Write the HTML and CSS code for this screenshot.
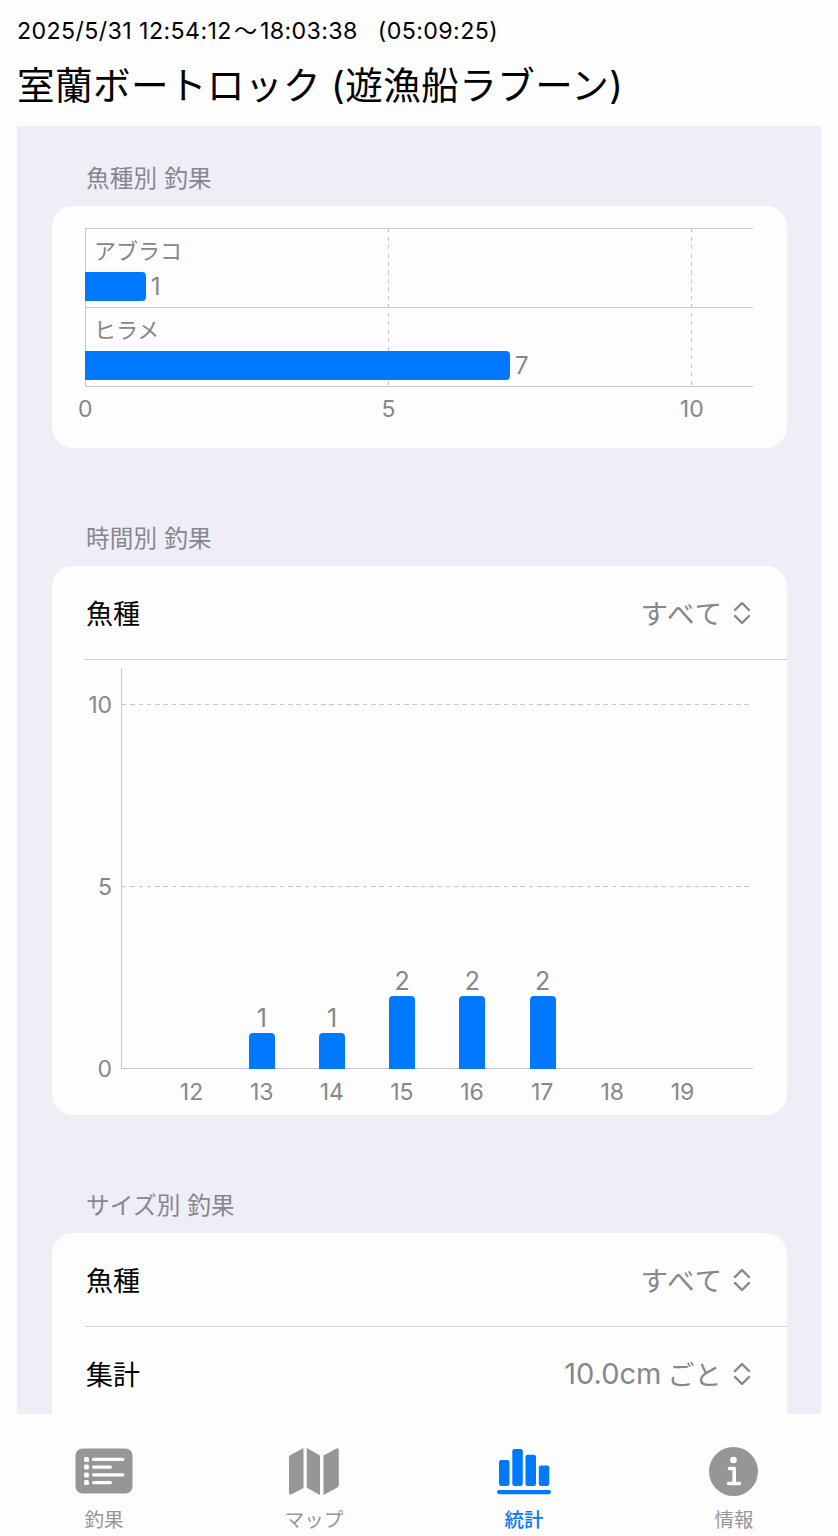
FILE: index.html
```html
<!DOCTYPE html>
<html lang="ja">
<head>
    <meta charset="UTF-8">
    <meta name="viewport" content="width=device-width, initial-scale=1.0">
    <title>室蘭ボートロック</title>
    <link rel="stylesheet" href="styles.css">
</head>
<body>

    <header class="header">
        <p class="date"><span>2025/5/31 12:54:12</span><span class="wave">〜</span><span>18:03:38</span><span class="duration">(05:09:25)</span></p>
        <h1>室蘭ボートロック (遊漁船ラブーン)</h1>
    </header>

    <main class="content">
        <!-- Catch by species -->
        <h2>魚種別 釣果</h2>
        <section class="card species-card">
            <div class="h-plot">
                <div class="h-row">
                    <span class="h-name">アブラコ</span>
                    <div class="h-line"><div class="h-bar" style="width: 9.09%"></div><span>1</span></div>
                </div>
                <div class="h-row">
                    <span class="h-name">ヒラメ</span>
                    <div class="h-line"><div class="h-bar" style="width: 63.64%"></div><span>7</span></div>
                </div>
            </div>
            <div class="h-axis"><span>0</span><span>5</span><span>10</span></div>
        </section>

        <!-- Catch by hour -->
        <h2>時間別 釣果</h2>
        <section class="card time-card">
            <div class="row">
                <span>魚種</span>
                <span class="picker"><span class="all">すべて</span>
                    <svg class="chevrons" viewBox="0 0 18 24"><path d="M2 9 9 2l7 7M2 15l7 7 7-7"/></svg>
                </span>
            </div>
            <div class="v-chart">
                <div class="v-axis"><span>10</span><span>5</span><span>0</span></div>
                <div class="v-plot">
                    <div class="v-col"></div>
                    <div class="v-col"><span>1</span><div class="v-bar" style="height: 9.09%"></div></div>
                    <div class="v-col"><span>1</span><div class="v-bar" style="height: 9.09%"></div></div>
                    <div class="v-col"><span>2</span><div class="v-bar" style="height: 18.18%"></div></div>
                    <div class="v-col"><span>2</span><div class="v-bar" style="height: 18.18%"></div></div>
                    <div class="v-col"><span>2</span><div class="v-bar" style="height: 18.18%"></div></div>
                    <div class="v-col"></div>
                    <div class="v-col"></div>
                </div>
                <div class="v-hours">
                    <span>12</span><span>13</span><span>14</span><span>15</span><span>16</span><span>17</span><span>18</span><span>19</span>
                </div>
            </div>
        </section>

        <!-- Catch by size -->
        <h2>サイズ別 釣果</h2>
        <section class="card size-card">
            <div class="row">
                <span>魚種</span>
                <span class="picker"><span class="all">すべて</span>
                    <svg class="chevrons" viewBox="0 0 18 24"><path d="M2 9 9 2l7 7M2 15l7 7 7-7"/></svg>
                </span>
            </div>
            <div class="row last">
                <span>集計</span>
                <span class="picker"><span class="size">10.0cm</span>ごと
                    <svg class="chevrons" viewBox="0 0 18 24"><path d="M2 9 9 2l7 7M2 15l7 7 7-7"/></svg>
                </span>
            </div>
        </section>
    </main>

    <nav class="tabs">
        <a class="tab">
            <svg width="58" height="52" viewBox="0 0 58 52">
                <rect x="0.5" y="3.5" width="57" height="45" rx="7" fill="currentColor"/>
                <g fill="#fdfdfd">
                    <rect x="9" y="12" width="5" height="5" rx="1.5"/>
                    <rect x="9" y="19.5" width="5" height="5" rx="1.5"/>
                    <rect x="9" y="27.5" width="5" height="5" rx="1.5"/>
                    <rect x="9" y="35" width="5" height="5" rx="1.5"/>
                    <rect x="17" y="12.8" width="32.5" height="3.2" rx="1.6"/>
                    <rect x="17" y="20.5" width="20" height="3.2" rx="1.6"/>
                    <rect x="17" y="28.2" width="32.5" height="3.2" rx="1.6"/>
                    <rect x="17" y="36" width="20" height="3.2" rx="1.6"/>
                </g>
            </svg>
            <span>釣果</span>
        </a>
        <a class="tab">
            <svg width="58" height="52" viewBox="0 0 58 52">
                <path d="M18.5 3v40L6.5 49.3Q4 50.3 4 47.8V12.5Q4 10.8 5.5 10Z" fill="currentColor"/>
                <path d="M21.8 3 35 10.5V50L21.8 42.8Z" fill="currentColor"/>
                <path d="M38.5 10.5 51 3.7Q53.8 2.5 53.8 5.5V40Q53.8 41.8 52.3 42.6L38.5 50Z" fill="currentColor"/>
            </svg>
            <span>マップ</span>
        </a>
        <a class="tab active">
            <svg width="58" height="52" viewBox="0 0 58 52" fill="currentColor">
                <rect x="4" y="15" width="10.5" height="26" rx="2.2"/>
                <rect x="17.3" y="4" width="10.5" height="37" rx="2.2"/>
                <rect x="30.5" y="9.8" width="10.5" height="31.2" rx="2.2"/>
                <rect x="43.8" y="20.4" width="10.5" height="20.6" rx="2.2"/>
                <rect x="2" y="45" width="54" height="4.2" rx="2.1"/>
            </svg>
            <span>統計</span>
        </a>
        <a class="tab">
            <svg width="58" height="52" viewBox="0 0 58 52">
                <circle cx="28.5" cy="26.5" r="24.5" fill="currentColor"/>
                <circle cx="28.5" cy="15" r="3.3" fill="#fdfdfd"/>
                <path d="M24.5 23.5h4.700V38.500M23.500 38.500h11" fill="none" stroke="#fdfdfd" stroke-width="3.6" stroke-linecap="round" stroke-linejoin="round"/>
            </svg>
            <span>情報</span>
        </a>
    </nav>

</body>
</html>
```
FILE: styles.css
```css
* {
    box-sizing: border-box;
}

body {
    font-family: Inter, "Noto Sans CJK JP", sans-serif;
    margin: 0;
    height: 1536px;
    overflow: hidden;
    background-color: #fdfdfd;
    color: #000;
    display: flex;
    flex-direction: column;
}

.header {
    height: 126px;
    padding: 16px 17px 0;
    flex: none;
}

.date {
    margin: 0;
    height: 30px;
    display: flex;
    font-size: 23.2px;
    line-height: 30px;
    letter-spacing: 0.4px;
    white-space: pre;
}

.wave {
    width: 28px;
    text-align: center;
}

.duration {
    margin-left: 20px;
}

h1 {
    margin: 11px 0 0;
    font-size: 37.5px;
    font-weight: 400;
    line-height: 58px;
    letter-spacing: 0.5px;
    word-spacing: -1px;
    white-space: nowrap;
}

.content {
    height: 1288px;
    flex: none;
    margin: 0 17px;
    padding: 0 34px 0 35px;
    background-color: #efeef6;
    overflow: hidden;
}

h2 {
    margin: 0;
    height: 80px;
    padding: 36px 0 0 34px;
    font-size: 23.6px;
    font-weight: 400;
    line-height: 33px;
    letter-spacing: 0.2px;
    color: #87868e;
}

.card {
    background-color: #fdfdfd;
    border-radius: 21px;
    margin-bottom: 38px;
}

/* Horizontal bars */
.species-card {
    height: 242px;
    padding: 22px 34px 0 33px;
    color: #87878a;
}

.h-plot {
    border-left: 1px solid #c8c8ca;
    border-bottom: 1px solid #c8c8ca;
    background-image:
        repeating-linear-gradient(to bottom, #c8c8ca 0 4px, transparent 4px 8.5px),
        repeating-linear-gradient(to bottom, #c8c8ca 0 4px, transparent 4px 8.5px);
    background-size: 1px 100%;
    background-position: 302px 0, 605px 0;
    background-repeat: no-repeat;
}

.h-row {
    height: 79px;
    border-top: 1px solid #c8c8ca;
}

.h-name {
    display: block;
    height: 43px;
    padding-left: 8px;
    font-size: 22px;
    line-height: 44px;
}

.h-line {
    display: flex;
    align-items: center;
    height: 29px;
    margin-left: -1px;
    gap: 5px;
    font-size: 24px;
}

.h-bar {
    height: 29px;
    background-color: #0079ff;
    border-radius: 0 4px 4px 0;
}

.h-axis {
    display: flex;
    margin-left: -151.5px;
    padding-top: 8px;
    font-size: 23px;
    line-height: 28px;
}

.h-axis span {
    flex: 0 0 303.3px;
    text-align: center;
}

/* Form rows */
.row {
    display: flex;
    align-items: center;
    justify-content: space-between;
    height: 94px;
    margin-left: 33px;
    padding: 0 36px 0 1px;
    border-bottom: 1px solid #d3d3d6;
    font-size: 27px;
}

.row.last {
    height: 93px;
    border-bottom: none;
}

.picker {
    display: flex;
    align-items: center;
    color: #87878a;
}

.all {
    margin: -2px -1.5px 0 0;
    font-size: 27.5px;
    letter-spacing: 1px;
}

.size {
    margin-right: 6px;
    font-size: 29px;
}

.chevrons {
    width: 18px;
    height: 24px;
    margin-left: 11.5px;
    fill: none;
    stroke: #87878a;
    stroke-width: 2.4;
    stroke-linecap: round;
    stroke-linejoin: round;
}

/* Vertical bars */
.time-card {
    height: 549px;
}

.v-chart {
    display: grid;
    grid-template-columns: 36px 632px;
    grid-template-rows: 401px 46px;
    padding: 8px 0 0 33px;
    color: #87878a;
    font-size: 23px;
}

.v-axis {
    display: flex;
    flex-direction: column;
    justify-content: space-between;
    margin: 22px 9px -15px 0;
    text-align: right;
    line-height: 30px;
}

.v-plot {
    display: flex;
    padding: 0 35px 0 34.6px;
    border-left: 1px solid #c8c8ca;
    border-bottom: 1px solid #c8c8ca;
    background-image:
        repeating-linear-gradient(to right, #c8c8ca 0 4.5px, transparent 4.5px 8.3px),
        repeating-linear-gradient(to right, #c8c8ca 0 4.5px, transparent 4.5px 8.3px);
    background-size: 627px 1px;
    background-position: 0 36px, 0 218px;
    background-repeat: no-repeat;
}

.v-col {
    flex: 1;
    display: flex;
    flex-direction: column;
    align-items: center;
    justify-content: flex-end;
    margin-bottom: -1px;
    font-size: 25px;
    line-height: 30px;
}

.v-bar {
    width: 26px;
    background-color: #0079ff;
    border-radius: 4px 4px 0 0;
}

.v-hours {
    grid-column: 2;
    display: flex;
    padding: 8px 35.5px 0;
    line-height: 30px;
}

.v-hours span {
    flex: 1;
    text-align: center;
}

/* Runs on below the tab bar */
.size-card {
    height: 280px;
}

/* Bottom tab bar */
.tabs {
    display: flex;
    height: 122px;
    flex: none;
    margin: 0 -1px;
    padding-top: 31px;
}

.tab {
    flex: 1;
    display: flex;
    flex-direction: column;
    align-items: center;
    color: #969696;
    font-size: 19.5px;
    line-height: 28px;
}

.tab span {
    margin-top: 9px;
}

.active {
    color: #0079ff;
    font-weight: 500;
}
```
